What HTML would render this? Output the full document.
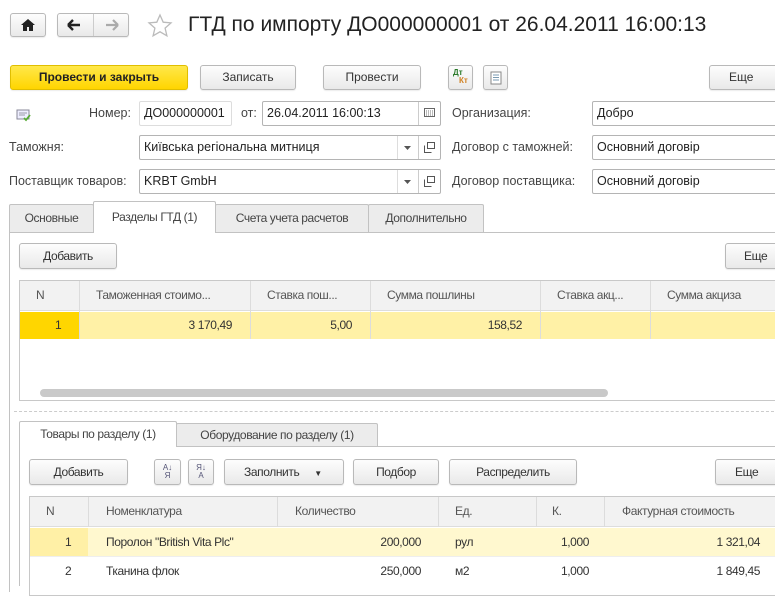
<!DOCTYPE html>
<html><head><meta charset="utf-8"><style>
*{box-sizing:border-box;margin:0;padding:0}
body{width:775px;height:585px;overflow:hidden;background:#fff;font-family:"Liberation Sans",sans-serif;font-size:12px;color:#333;position:relative}
.a{position:absolute}
.btn{position:absolute;border:1px solid #b9b9b9;border-radius:3px;background:linear-gradient(#fdfdfd,#e9e9e9);text-align:center;color:#333;box-shadow:0 1px 1px rgba(0,0,0,.08)}
.inp{position:absolute;border:1px solid #b4b4b4;border-radius:2px;background:#fff;padding-left:4px;color:#222;font-size:12.5px}
.n{letter-spacing:-0.4px;font-size:12px}
.lbl{position:absolute;color:#444;font-size:12.5px}
.tab{position:absolute;border:1px solid #c2c2c2;border-bottom:none;background:#ececec;text-align:center;color:#444;border-radius:2px 2px 0 0}
.cell{position:absolute;white-space:nowrap}
.vl{position:absolute;width:1px;background:#dcdcdc}
</style></head><body>
<!-- top nav -->
<div class="btn" style="left:10px;top:13px;width:36px;height:24px"><svg width="16" height="14" style="margin-top:4px" viewBox="0 0 16 14"><path d="M8 1L1 7h2v6h4V9h2v4h4V7h2z" fill="#222"/></svg></div>
<div class="btn" style="left:57px;top:13px;width:72px;height:24px"></div>
<div class="a" style="left:93px;top:14px;width:1px;height:22px;background:#ccc"></div>
<svg class="a" style="left:66px;top:18px" width="16" height="14" viewBox="0 0 16 14"><path d="M2 7h12M2 7l5-5M2 7l5 5" stroke="#222" stroke-width="2.4" fill="none"/></svg>
<svg class="a" style="left:104px;top:18px" width="16" height="14" viewBox="0 0 16 14"><path d="M14 7H2M14 7L9 2M14 7l-5 5" stroke="#aaa" stroke-width="2.2" fill="none"/></svg>
<svg class="a" style="left:147px;top:13px" width="26" height="26" viewBox="0 0 26 26"><path d="M13 2l3.2 7.2 7.8.7-5.9 5.2 1.8 7.7L13 18.8 6.1 22.8l1.8-7.7L2 9.9l7.8-.7z" fill="none" stroke="#bbb" stroke-width="1.3"/></svg>
<div class="a" style="left:188px;top:13px;font-size:21px;color:#222">ГТД по импорту ДО000000001 от 26.04.2011 16:00:13</div>
<!-- command bar -->
<div class="btn" style="left:10px;top:65px;width:178px;height:25px;background:linear-gradient(#ffe84a,#ffd500);border-color:#e0be00;font-weight:bold;line-height:23px;color:#222">Провести и закрыть</div>
<div class="btn" style="left:200px;top:65px;width:96px;height:25px;line-height:23px">Записать</div>
<div class="btn" style="left:323px;top:65px;width:98px;height:25px;line-height:23px">Провести</div>
<div class="btn" style="left:448px;top:65px;width:25px;height:25px"><span class="a" style="left:4px;top:2px;font-size:8px;font-weight:bold;color:#2a7a2a">Дт</span><span class="a" style="left:10px;top:10px;font-size:8px;font-weight:bold;color:#d08020">Кт</span></div>
<div class="btn" style="left:483px;top:65px;width:25px;height:25px"><svg width="12" height="14" style="margin-top:5px" viewBox="0 0 12 14"><rect x="1" y="1" width="10" height="12" fill="#fff" stroke="#888"/><path d="M3 4h6M3 6.5h6M3 9h6" stroke="#7a9ab0"/></svg></div>
<div class="btn" style="left:709px;top:65px;width:80px;height:25px;line-height:23px;text-align:left;padding-left:19px">Еще</div>
<!-- row 2 -->
<svg class="a" style="left:16px;top:108px" width="16" height="14" viewBox="0 0 16 14"><rect x="1" y="2" width="12" height="9" fill="#eef" stroke="#889"/><path d="M3 5h8M3 7h6" stroke="#99a"/><path d="M8 10l2 2 4-5" stroke="#5a3" stroke-width="1.8" fill="none"/></svg>
<div class="lbl" style="left:89px;top:106px">Номер:</div>
<div class="inp" style="left:139px;top:101px;width:93px;height:25px;line-height:23px;border-color:#ddd">ДО000000001</div>
<div class="lbl" style="left:241px;top:106px">от:</div>
<div class="inp" style="left:262px;top:101px;width:179px;height:25px;line-height:23px">26.04.2011 16:00:13</div>
<div class="a" style="left:418px;top:102px;width:1px;height:23px;background:#ccc"></div>
<svg class="a" style="left:424px;top:108px" width="11" height="9"><rect x=".5" y=".5" width="10" height="8" fill="none" stroke="#666"/><path d="M2 3h7M2 5h7M2 7h7" stroke="#777" stroke-dasharray="1 1"/></svg>
<div class="lbl" style="left:452px;top:106px">Организация:</div>
<div class="inp" style="left:592px;top:101px;width:200px;height:25px;line-height:23px">Добро</div>
<!-- row 3 -->
<div class="lbl" style="left:9px;top:140px">Таможня:</div>
<div class="inp" style="left:139px;top:135px;width:302px;height:25px;line-height:23px">Київська регіональна митниця</div>
<div class="lbl" style="left:452px;top:140px">Договор с таможней:</div>
<div class="inp" style="left:592px;top:135px;width:200px;height:25px;line-height:23px">Основний договір</div>
<!-- row 4 -->
<div class="lbl" style="left:9px;top:174px">Поставщик товаров:</div>
<div class="inp" style="left:139px;top:169px;width:302px;height:25px;line-height:23px">KRBT GmbH</div>
<div class="lbl" style="left:452px;top:174px">Договор поставщика:</div>
<div class="inp" style="left:592px;top:169px;width:200px;height:25px;line-height:23px">Основний договір</div>
<!-- dropdown/open buttons -->
<div class="a" style="left:397px;top:136px;width:1px;height:23px;background:#ddd"></div>
<div class="a" style="left:418px;top:136px;width:1px;height:23px;background:#ccc"></div>
<div class="a" style="left:397px;top:170px;width:1px;height:23px;background:#ddd"></div>
<div class="a" style="left:418px;top:170px;width:1px;height:23px;background:#ccc"></div>
<svg class="a" style="left:404px;top:146px" width="7" height="4"><path d="M0 0h7L3.5 4z" fill="#555"/></svg>
<svg class="a" style="left:404px;top:180px" width="7" height="4"><path d="M0 0h7L3.5 4z" fill="#555"/></svg>
<svg class="a" style="left:424px;top:142px" width="11" height="11"><rect x="3.5" y=".5" width="7" height="6" fill="none" stroke="#555"/><path d="M.5 3.5v7h7" fill="none" stroke="#555"/></svg>
<svg class="a" style="left:424px;top:176px" width="11" height="11"><rect x="3.5" y=".5" width="7" height="6" fill="none" stroke="#555"/><path d="M.5 3.5v7h7" fill="none" stroke="#555"/></svg>
<!-- main tabs -->
<div class="a" style="left:9px;top:232px;width:770px;height:1px;background:#c2c2c2"></div>
<div class="a" style="left:9px;top:232px;width:1px;height:360px;background:#c2c2c2"></div>
<div class="tab n" style="left:9px;top:204px;width:85px;height:28px;line-height:27px">Основные</div>
<div class="tab n" style="left:93px;top:201px;width:123px;height:32px;line-height:31px;background:#fff">Разделы ГТД (1)</div>
<div class="tab n" style="left:215px;top:204px;width:154px;height:28px;line-height:27px">Счета учета расчетов</div>
<div class="tab n" style="left:368px;top:204px;width:116px;height:28px;line-height:27px">Дополнительно</div>
<div class="btn n" style="left:19px;top:243px;width:98px;height:26px;line-height:24px">Добавить</div>
<div class="btn n" style="left:725px;top:243px;width:70px;height:26px;line-height:24px;text-align:left;padding-left:18px">Еще</div>
<!-- table 1 -->
<div class="a" style="left:19px;top:280px;width:760px;height:121px;border:1px solid #c8c8c8;background:#fff"></div>
<div class="a" style="left:20px;top:281px;width:760px;height:30px;background:#f2f2f2;border-bottom:1px solid #ddd"></div>
<div class="a" style="left:20px;top:312px;width:760px;height:27px;background:#fff1a6"></div>
<div class="a" style="left:20px;top:312px;width:59px;height:27px;background:#ffd600"></div>
<div class="vl" style="left:79px;top:281px;height:58px"></div>
<div class="vl" style="left:250px;top:281px;height:58px"></div>
<div class="vl" style="left:370px;top:281px;height:58px"></div>
<div class="vl" style="left:540px;top:281px;height:58px"></div>
<div class="vl" style="left:650px;top:281px;height:58px"></div>
<div class="cell n" style="left:36px;top:288px;color:#555">N</div>
<div class="cell n" style="left:96px;top:288px;color:#555">Таможенная стоимо...</div>
<div class="cell n" style="left:267px;top:288px;color:#555">Ставка пош...</div>
<div class="cell n" style="left:387px;top:288px;color:#555">Сумма пошлины</div>
<div class="cell n" style="left:557px;top:288px;color:#555">Ставка акц...</div>
<div class="cell n" style="left:667px;top:288px;color:#555">Сумма акциза</div>
<div class="cell n" style="left:55px;top:318px">1</div>
<div class="cell n" style="right:543px;top:318px">3 170,49</div>
<div class="cell n" style="right:423px;top:318px">5,00</div>
<div class="cell n" style="right:253px;top:318px">158,52</div>
<div class="a" style="left:40px;top:389px;width:568px;height:8px;border-radius:4px;background:#c9c9c9"></div>
<!-- dashed separator -->
<div class="a" style="left:14px;top:411px;width:765px;border-top:1px dashed #ccc"></div>
<!-- inner tabs -->
<div class="a" style="left:19px;top:446px;width:760px;height:1px;background:#c2c2c2"></div>
<div class="a" style="left:19px;top:446px;width:1px;height:140px;background:#c2c2c2"></div>
<div class="tab n" style="left:19px;top:421px;width:158px;height:26px;line-height:25px;background:#fff">Товары по разделу (1)</div>
<div class="tab n" style="left:176px;top:423px;width:202px;height:23px;line-height:22px">Оборудование по разделу (1)</div>
<div class="btn n" style="left:29px;top:459px;width:99px;height:26px;line-height:24px">Добавить</div>
<div class="btn" style="left:154px;top:459px;width:27px;height:26px;font-size:8px;line-height:8px;padding-top:4px;color:#557">А↓<br>Я</div>
<div class="btn" style="left:188px;top:459px;width:26px;height:26px;font-size:8px;line-height:8px;padding-top:4px;color:#557">Я↓<br>А</div>
<div class="btn n" style="left:224px;top:459px;width:120px;height:26px;line-height:24px;text-align:left;padding-left:19px">Заполнить <span style="font-size:8px;margin-left:12px">▼</span></div>
<div class="btn n" style="left:353px;top:459px;width:86px;height:26px;line-height:24px">Подбор</div>
<div class="btn n" style="left:449px;top:459px;width:128px;height:26px;line-height:24px">Распределить</div>
<div class="btn n" style="left:715px;top:459px;width:80px;height:26px;line-height:24px;text-align:left;padding-left:19px">Еще</div>
<!-- table 2 -->
<div class="a" style="left:29px;top:496px;width:760px;height:100px;border:1px solid #c8c8c8;background:#fff"></div>
<div class="a" style="left:30px;top:497px;width:760px;height:30px;background:#f2f2f2;border-bottom:1px solid #ddd"></div>
<div class="a" style="left:30px;top:528px;width:760px;height:28px;background:#fff8cf"></div>
<div class="a" style="left:30px;top:528px;width:58px;height:28px;background:#fff0a6"></div>
<div class="a" style="left:30px;top:556px;width:760px;height:1px;background:#eee"></div>
<div class="vl" style="left:88px;top:497px;height:30px"></div>
<div class="vl" style="left:277px;top:497px;height:30px"></div>
<div class="vl" style="left:438px;top:497px;height:30px"></div>
<div class="vl" style="left:536px;top:497px;height:30px"></div>
<div class="vl" style="left:604px;top:497px;height:30px"></div>
<div class="cell n" style="left:46px;top:504px;color:#555">N</div>
<div class="cell n" style="left:106px;top:504px;color:#555">Номенклатура</div>
<div class="cell n" style="left:295px;top:504px;color:#555">Количество</div>
<div class="cell n" style="left:455px;top:504px;color:#555">Ед.</div>
<div class="cell n" style="left:552px;top:504px;color:#555">К.</div>
<div class="cell n" style="left:622px;top:504px;color:#555">Фактурная стоимость</div>
<div class="cell n" style="left:65px;top:535px">1</div>
<div class="cell n" style="left:106px;top:535px">Поролон "British Vita Plc"</div>
<div class="cell n" style="right:354px;top:535px">200,000</div>
<div class="cell n" style="left:455px;top:535px">рул</div>
<div class="cell n" style="right:186px;top:535px">1,000</div>
<div class="cell n" style="right:15px;top:535px">1 321,04</div>
<div class="cell n" style="left:65px;top:564px">2</div>
<div class="cell n" style="left:106px;top:564px">Тканина флок</div>
<div class="cell n" style="right:354px;top:564px">250,000</div>
<div class="cell n" style="left:455px;top:564px">м2</div>
<div class="cell n" style="right:186px;top:564px">1,000</div>
<div class="cell n" style="right:15px;top:564px">1 849,45</div>
</body></html>
